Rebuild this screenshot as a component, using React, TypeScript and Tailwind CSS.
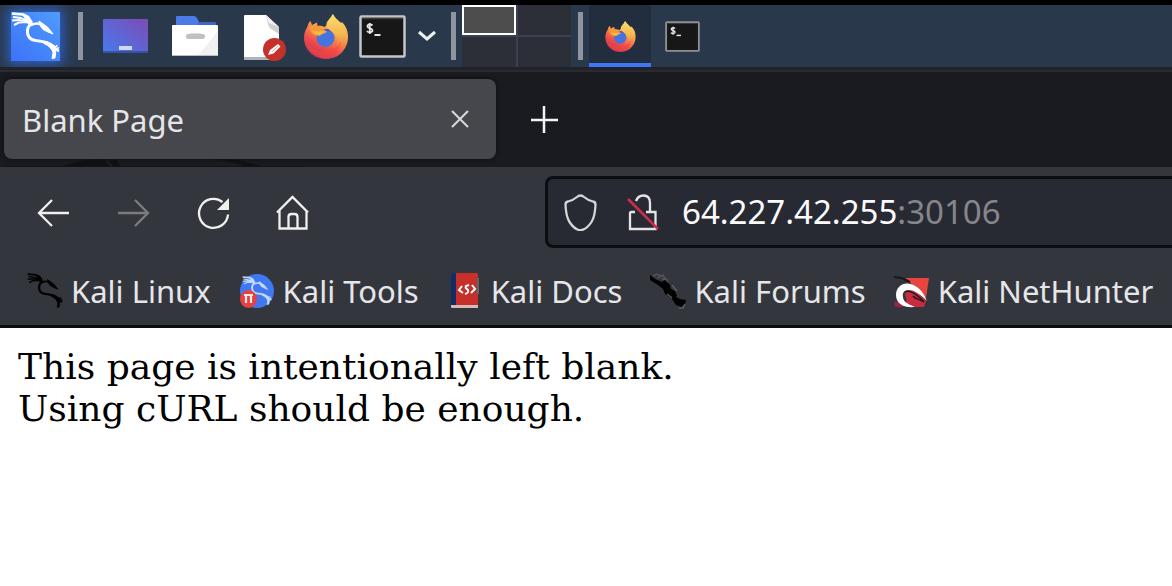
import type { ReactNode } from "react";

function Separator({ className = "" }: { className?: string }) {
  return <div className={`h-12 w-[5px] shrink-0 bg-[#8f959e] ${className}`} />;
}

function Dragon({ className }: { className: string }) {
  return (
    <svg viewBox="0 0 49 49" className={className} fill="none" stroke="currentColor" strokeLinejoin="round" aria-hidden="true">
      <path d="M1 1.500l11 1 5 2.500 4 6" strokeWidth="2.600" />
      <path d="M2 5l8 1 7 3M1 8.500l8-.5 8 2" strokeWidth="1.800" />
      <path d="M3 13l5-2.500 8-.5 4 3" strokeWidth="2" />
      <path d="M12 3l6 3 2.500 6-5-3z" fill="currentColor" strokeWidth="1" />
      <path d="M20 12q-4 3-3.500 8.500.5 7 8 8 6 .5 12 2.500" strokeWidth="3" />
      <path d="M20 13q5-2.500 10-1" strokeWidth="2.600" />
      <path d="M28 9l5 3.500 4 3 5 6.500-5-2-5-2.500-3-4z" fill="currentColor" strokeWidth="1" />
      <path d="M33 29q8 1.500 11 6l4 4-3-1-1 8-3 .500 1-6q-2-6-9-9z" fill="currentColor" strokeWidth="1" />
      <path d="M42 33l3 2 1-2M47 35v5" strokeWidth="1.500" />
    </svg>
  );
}

function FirefoxLogo({ id, className }: { id: string; className: string }) {
  return (
    <svg viewBox="0 0 44 45" className={className} aria-hidden="true">
      <defs>
        <linearGradient id={`${id}-body`} x1="0.8" y1="0" x2="0.3" y2="1">
          <stop offset="0" stopColor="#f9e06c" />
          <stop offset="0.4" stopColor="#f9a04a" />
          <stop offset="0.7" stopColor="#f2504a" />
          <stop offset="1" stopColor="#c02c5c" />
        </linearGradient>
        <linearGradient id={`${id}-tail`} x1="0.5" y1="0" x2="0.5" y2="1">
          <stop offset="0" stopColor="#f7e070" />
          <stop offset="0.55" stopColor="#f5b84f" />
          <stop offset="1" stopColor="#f0704a" />
        </linearGradient>
      </defs>
      <path
        fill={`url(#${id}-body)`}
        d="M22 45C9 45 0 35.500 0 23.500c0-4 1.500-8 3.500-11 .3-2 1.500-4.500 3-5.500l1.500 4 5-2.500.500 3.500c2.500-.5 5 0 7 1L26 8l3-8c2 4 5 6 8 9l1-1c4 4 6 9 6 14.500C44 35.500 34.500 45 22 45z"
      />
      <circle cx="21.500" cy="24" r="9" fill="#4573e0" />
      <path fill="#6a42b0" d="M20 16c5-2.500 9 0 10.500 4-3-3-7-3.500-10.500-4z" />
      <path
        fill={`url(#${id}-tail)`}
        d="M28.500 0c1 5 11 8 13 17 1.500 8-2 16-10 19 3-5 3-9 .5-13.500C29.500 17.500 23 16 22.500 11c-.3-4 4-6 6-11z"
      />
      <path fill="#f59a3c" d="M5 14c4-3 9-3 13 0 2 1.500 3 3 5 3.500-1 2-5 2-7 4.500-2-1-5 0-7-2-2-1.500-3-4-4-6z" />
      <path fill="#f8b93e" d="M8 17c5 1 9 0 14 .5-2 2-5 1.500-7 4-2-.5-5-1.500-7-4.500z" />
      <path fill="#f0483f" opacity="0.6" d="M1 22c2 10 10 16 20 15 8-.5 13-4 16-10-1 10-8 17-16 17C10 44 1 34 1 22z" />
    </svg>
  );
}

function TerminalLogo({ className, dim = false }: { className: string; dim?: boolean }) {
  return (
    <svg viewBox="0 0 47 43" preserveAspectRatio="none" className={className} aria-hidden="true">
      <rect x="1.500" y="1.500" width="44" height="40" rx="1" fill="#171717" stroke={dim ? "#8d9093" : "#c3c6c8"} strokeWidth="2.500" />
      <path d="M3 3.500h41" stroke="#3a3c3d" strokeWidth="1.500" />
      <path d="M13.500 10.500c-2-2-5.500-1-5 1 .5 2.500 5 1.500 5 4 0 2-4 2.500-5.500.5M10.800 8v11" fill="none" stroke="#e6e6e6" strokeWidth="1.800" />
      <path d="M15.500 20h6" stroke="#e6e6e6" strokeWidth="2" />
    </svg>
  );
}

function DesktopIcon() {
  return (
    <svg viewBox="0 0 45 34" className="h-[34px] w-[45px]" aria-hidden="true">
      <defs>
        <linearGradient id="desk" x1="0" y1="1" x2="1" y2="0">
          <stop offset="0" stopColor="#467bf0" />
          <stop offset="1" stopColor="#7d4bb5" />
        </linearGradient>
      </defs>
      <rect width="45" height="34" rx="1" fill="url(#desk)" />
      <path d="M0 33h45" stroke="#3456a0" strokeWidth="2" />
      <rect x="16" y="27" width="13" height="4" fill="#d3d9f4" />
    </svg>
  );
}

function FolderIcon() {
  return (
    <svg viewBox="0 0 46 41" className="h-[41px] w-[46px]" aria-hidden="true">
      <path d="M4 1q0-1 1-1h17q2 0 3 2l2 4h15q2 0 2 2v4H4z" fill="#4a7be8" />
      <path d="M27 6h15q2 0 2 2v2H25z" fill="#3c66cc" />
      <rect y="9" width="46" height="31" rx="1" fill="#fff" />
      <path d="M46 15v25H26q3-5 8-10 5-6 12-15z" fill="#f0f0f0" />
      <path d="M0 39.500h46" stroke="#b9bcc1" />
      <path d="M16 20q1-3 4-3h7q3 0 4 3z" fill="#d9d9d9" />
      <rect x="14" y="18" width="19" height="5" rx="2" fill="#c0c0c0" />
    </svg>
  );
}

function DocumentIcon() {
  return (
    <svg viewBox="0 0 42 47" className="h-[47px] w-[42px]" aria-hidden="true">
      <path d="M0 1q0-1 1-1h21l13 14v31H0z" fill="#fff" />
      <path d="M22 0l2 9q0 3 3 5l8 5v-7z" fill="#d0d0d0" />
      <path d="M22 0l3 8 10 4z" fill="#f3f3f3" />
      <path d="M0 43.500h24" stroke="#aeb3ba" strokeWidth="3" />
      <circle cx="30.500" cy="34.500" r="11.500" fill="#c6302b" />
      <path d="M24 40l2-5 8-6 2.500 2.500-7 7z" fill="#fff" />
      <path d="M28 37l6-6" stroke="#e9a5a2" strokeWidth="1" />
    </svg>
  );
}

function Panel() {
  return (
    <header className="flex h-[62px] items-center overflow-hidden bg-[#2a384b]">
      <button aria-label="Applications" className="flex w-[70px] shrink-0 justify-center">
        <span className="block size-[49px] bg-linear-to-tr from-[#3d71fa] to-[#509cfb] text-white shadow-[0_0_12px_3px_#2f63c8]">
          <Dragon className="size-[49px]" />
        </span>
      </button>
      <Separator className="ml-2" />
      <button aria-label="Show desktop" className="ml-[7px] flex w-[70px] shrink-0 justify-center">
        <DesktopIcon />
      </button>
      <button aria-label="Files" className="flex w-[70px] shrink-0 justify-center">
        <FolderIcon />
      </button>
      <button aria-label="Text editor" className="flex w-[70px] shrink-0 justify-center pt-1">
        <DocumentIcon />
      </button>
      <button aria-label="Firefox" className="flex w-[52px] shrink-0 justify-center">
        <FirefoxLogo id="launcher" className="h-[45px] w-[44px]" />
      </button>
      <button aria-label="Terminal" className="flex w-[60px] shrink-0 justify-center">
        <TerminalLogo className="h-[43px] w-[47px]" />
      </button>
      <button aria-label="More terminals" className="flex w-[30px] shrink-0 justify-center">
        <svg viewBox="0 0 18 12" className="h-3 w-[18px]" aria-hidden="true">
          <path d="M1 2l8 7 8-7" fill="none" stroke="#eceef0" strokeWidth="3" />
        </svg>
      </button>
      <Separator className="ml-[9px]" />
      <div className="ml-[6px] grid h-full w-[109px] shrink-0 grid-cols-2 grid-rows-2 gap-[2px] bg-[#3d4050]">
        <button aria-label="Workspace 1" className="border-2 border-white bg-[#4d4d4d]" />
        <button aria-label="Workspace 2" className="bg-[#2c2e38]" />
        <button aria-label="Workspace 3" className="bg-[#2c2e38]" />
        <button aria-label="Workspace 4" className="bg-[#2c2e38]" />
      </div>
      <Separator className="ml-[7px]" />
      <button
        aria-label="Firefox window"
        className="ml-[6px] flex h-full w-[62px] shrink-0 items-center justify-center border-b-4 border-[#3e76f8] bg-[#222d3d] pt-1"
      >
        <FirefoxLogo id="task" className="h-[31px] w-[31px]" />
      </button>
      <button aria-label="Terminal window" className="flex w-[62px] shrink-0 justify-center">
        <TerminalLogo dim className="h-[31px] w-[35px]" />
      </button>
    </header>
  );
}

function TabBar() {
  return (
    <div className="h-[95px] bg-[#1a1b20] pt-[7px] pl-1">
      <div className="flex items-center">
        <div className="flex h-20 w-[492px] items-center justify-between rounded-lg bg-[#46474c] pr-6 pl-[18px] shadow-[0_0_5px_#0c0d10]">
          <span className="pt-[2px] text-[31px] leading-10 text-[#e6e6e8]">Blank Page</span>
          <button aria-label="Close tab">
            <svg viewBox="0 0 24 24" className="size-6" aria-hidden="true">
              <path d="M4 4l16 16M20 4L4 20" stroke="#d9d9db" strokeWidth="2" />
            </svg>
          </button>
        </div>
        <button aria-label="New tab" className="ml-[33px]">
          <svg viewBox="0 0 30 30" className="size-[30px]" aria-hidden="true">
            <path d="M15 2v27M2 16h27" stroke="#f4f4f2" strokeWidth="2.500" />
          </svg>
        </button>
      </div>
      <svg viewBox="0 0 300 8" className="h-2 w-[300px]" aria-hidden="true">
        <path d="M56 8Q76 1 92 0h8l6 8zM103 0h9l5 8h-7zM208 0h18q20 3 34 8h-16Q226 2 208 0z" fill="#0f1013" />
        <path d="M0 7.500h300" stroke="#111216" />
      </svg>
    </div>
  );
}

function NavButton({ label, children, disabled }: { label: string; children: ReactNode; disabled?: boolean }) {
  return (
    <button
      aria-label={label}
      disabled={disabled}
      className="flex w-20 shrink-0 justify-center pt-[2px] text-[#f0f0ef] disabled:text-[#7b7c81]"
    >
      <svg viewBox="0 0 34 36" className="h-9 w-[34px]" fill="none" stroke="currentColor" strokeWidth="2.300" aria-hidden="true">
        {children}
      </svg>
    </button>
  );
}

function AddressBar() {
  return (
    <div className="flex h-[90px] items-center overflow-hidden pl-[13px]">
      <NavButton label="Back">
        <path d="M33 18H3M16 5L3 18l13 13" />
      </NavButton>
      <NavButton label="Forward" disabled>
        <path d="M2 18h30M19 5l13 13-13 13" />
      </NavButton>
      <NavButton label="Reload">
        <path d="M32 19.500A14.500 14.500 0 1 1 26.500 7" />
        <path d="M33 3v12H21z" fill="currentColor" stroke="none" />
      </NavButton>
      <NavButton label="Home">
        <path d="M1 17.500L16.500 2l15.500 15.500M3.500 15v18.500h27V15M12.500 33V22q0-3 3-3h3q3 0 3 3v11" />
      </NavButton>
      <div className="-mr-3 ml-[212px] flex h-[72px] min-w-0 flex-1 items-center rounded-lg border-[3px] border-[#0c0d11] bg-[#282a33] pl-4">
        <svg viewBox="0 0 34 38" className="h-[38px] w-[34px] shrink-0" aria-hidden="true">
          <path
            d="M16.500 2.500q2 0 3.500 1.500 3.500 3 9 4.500 2.500.5 2.500 3-.5 12-4 17.500-4 6-8.500 7.700-2.500 1-5 0Q9.500 35 5.500 29 2 23.500 1.500 11.500q0-2.500 2.500-3 5.500-1.500 9-4.500Q14.500 2.500 16.500 2.500z"
            fill="none"
            stroke="#d5d5d6"
            strokeWidth="2.300"
          />
        </svg>
        <svg viewBox="0 0 34 38" className="ml-7 h-[38px] w-[34px] shrink-0" fill="none" aria-hidden="true">
          <path d="M10 8q2-5.500 7.500-5.500Q24 2.500 24 10v9M9 19H5.500Q4 19 4 20.500V36h25.500V19H20" stroke="#e4e4e4" strokeWidth="2.300" />
          <path d="M2 6l30 30" stroke="#cf2c4e" strokeWidth="2.500" />
        </svg>
        <label className="ml-[22px] flex text-[33px] leading-10 whitespace-nowrap">
          <input
            aria-label="Address"
            defaultValue="64.227.42.255"
            className="field-sizing-content bg-transparent text-[#fbfbfe] outline-none"
          />
          <span className="text-[#85868b]">:30106</span>
        </label>
      </div>
    </div>
  );
}

function ToolsIcon() {
  return (
    <span className="relative block size-[34px] rounded-full bg-[#3f78f0] text-[#c5dafc]">
      <Dragon className="size-[34px] p-[2px]" />
      <svg viewBox="0 0 17 18" className="absolute bottom-0 left-0 h-[18px] w-[17px]" aria-hidden="true">
        <ellipse cx="8.500" cy="9" rx="8.500" ry="9" fill="#e5423f" />
        <path d="M4 5h9M6 5v8M11 5v8" stroke="#ffe9e8" strokeWidth="2.200" fill="none" />
      </svg>
    </span>
  );
}

function DocsIcon() {
  return (
    <svg viewBox="0 0 28 36" className="h-9 w-7" aria-hidden="true">
      <path d="M2 0h24q1 0 1 1v31H0V2q0-2 2-2z" fill="#c73028" />
      <path d="M2 0h3v32H0V2q0-2 2-2z" fill="#122c66" />
      <path d="M0 32h27v3H1q-1 0-1-1z" fill="#d6babb" />
      <path d="M27 5v16" stroke="#526d70" strokeWidth="2" />
      <path d="M11 13l-3 4 4 3M21 12l3 4-4 4M18 12l-3 1q-1 2 1 3l1 1q1 3-3 4" fill="none" stroke="#fff" strokeWidth="2" />
    </svg>
  );
}

function ForumsIcon() {
  return (
    <svg viewBox="0 0 36 36" className="size-9" aria-hidden="true">
      <path d="M3 3l4-2 7 3 4 5M7 5l7-3M12 6l6 1" stroke="#54565c" strokeWidth="1.500" fill="none" />
      <path d="M0 2l5 4 7 3 3-2 5 5 1 4 4 2 2 5-1 1 4 2 6 1-1 4-4 3-5-2-4-6-7-5-2-5-5-4-8-5z" fill="#000" />
      <path d="M17 21l5 4M22 12l5 6M29 35h4l2-4" stroke="#5c5e63" strokeWidth="1.500" fill="none" />
    </svg>
  );
}

function NetHunterIcon() {
  return (
    <svg viewBox="0 0 35 33" className="h-[33px] w-[35px]" aria-hidden="true">
      <path d="M11 3h24l-3 20z" fill="#e8453f" />
      <path d="M0 1h4l7 5 11 5 12 15-3 6H17L3 28z" fill="#33353a" />
      <path d="M0 26l8 3 2 3H1z" fill="#9b214d" />
      <path d="M11 28q3-3 0-8 0-6 6-5l7 3 8 8-2 6H18z" fill="#c92c41" />
      <path d="M21 32C10 33 2 29 2 20 2 12 9 7 16 9c7 1 13 7 17 17-7-7-13-11-18-11-5 0-7 3-6 7 0 4 4 7 12 10z" fill="#fff" />
      <path d="M11 17c5-3 14 4 19 10-5-3-9-3-11-6" stroke="#1d1d20" strokeWidth="1.500" fill="none" />
      <path d="M0 2l8 1 8 4" stroke="#17181b" strokeWidth="2" fill="none" />
    </svg>
  );
}

const bookmarks: { label: string; icon: ReactNode }[] = [
  { label: "Kali Linux", icon: <Dragon className="size-9 text-black" /> },
  { label: "Kali Tools", icon: <ToolsIcon /> },
  { label: "Kali Docs", icon: <DocsIcon /> },
  { label: "Kali Forums", icon: <ForumsIcon /> },
  { label: "Kali NetHunter", icon: <NetHunterIcon /> },
];

function BookmarksBar() {
  return (
    <nav className="flex h-[68px] items-center gap-7 overflow-hidden pl-[27px]">
      {bookmarks.map(({ label, icon }) => (
        <a key={label} href="#" className="flex shrink-0 items-center gap-2 text-[31px] leading-10 whitespace-nowrap text-[#e6e6e8]">
          <span className="flex w-9 justify-center">{icon}</span>
          <span>{label}</span>
        </a>
      ))}
    </nav>
  );
}

export default function App() {
  return (
    <div className="flex min-h-screen flex-col bg-white font-['Noto_Sans',sans-serif]">
      <div className="h-[5px] bg-black" />
      <Panel />
      <div className="h-[5px] border-b-2 border-[#2a2b31] bg-[#202329]" />
      <TabBar />
      <div className="border-b-[3px] border-[#0c0d11] bg-[#34363e]">
        <AddressBar />
        <BookmarksBar />
      </div>
      <main className="px-[18px] pt-[18px] font-['DejaVu_Serif',serif] text-[36px] leading-[42px] text-black">
        <p>This page is intentionally left blank.</p>
        <p>Using cURL should be enough.</p>
      </main>
    </div>
  );
}
